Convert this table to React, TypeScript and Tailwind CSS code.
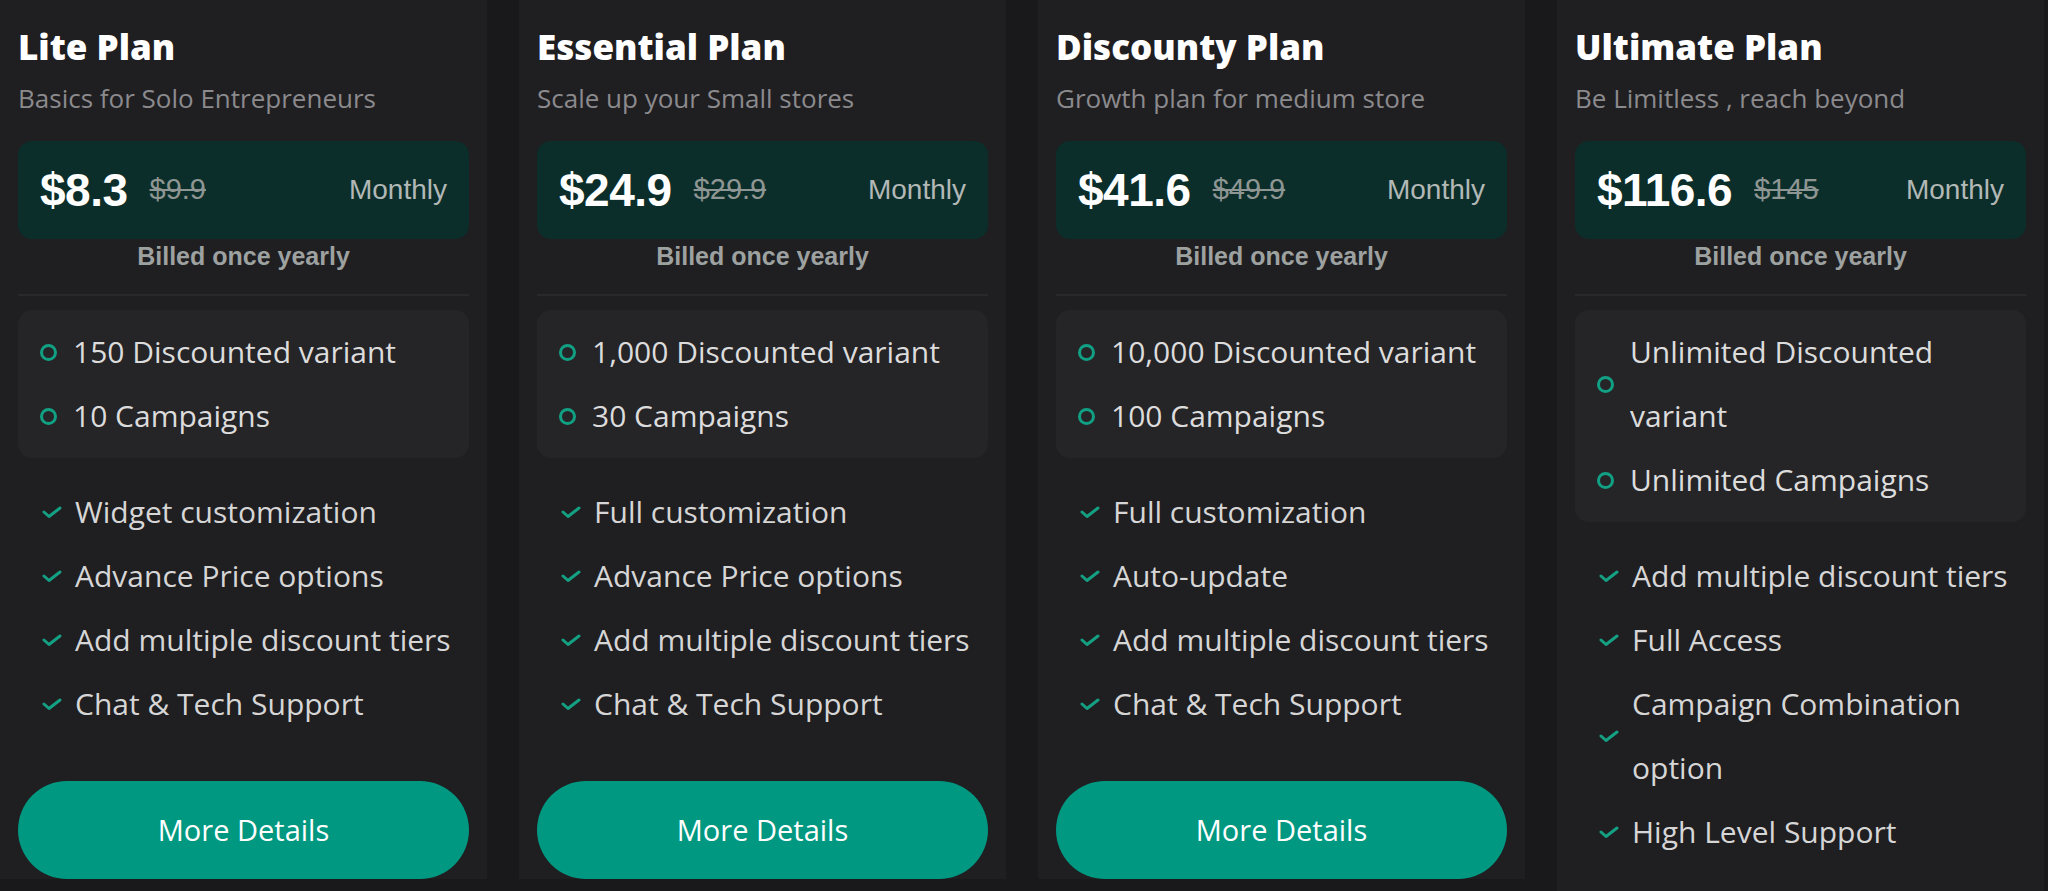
const plans = [
  {
    name: "Lite Plan",
    sub: "Basics for Solo Entrepreneurs",
    price: "$8.3",
    old: "$9.9",
    limits: ["150 Discounted variant", "10 Campaigns"],
    features: [
      "Widget customization",
      "Advance Price options",
      "Add multiple discount tiers",
      "Chat & Tech Support",
    ],
  },
  {
    name: "Essential Plan",
    sub: "Scale up your Small stores",
    price: "$24.9",
    old: "$29.9",
    limits: ["1,000 Discounted variant", "30 Campaigns"],
    features: [
      "Full customization",
      "Advance Price options",
      "Add multiple discount tiers",
      "Chat & Tech Support",
    ],
  },
  {
    name: "Discounty Plan",
    sub: "Growth plan for medium store",
    price: "$41.6",
    old: "$49.9",
    limits: ["10,000 Discounted variant", "100 Campaigns"],
    features: [
      "Full customization",
      "Auto-update",
      "Add multiple discount tiers",
      "Chat & Tech Support",
    ],
  },
  {
    name: "Ultimate Plan",
    sub: "Be Limitless , reach beyond",
    price: "$116.6",
    old: "$145",
    limits: ["Unlimited Discounted variant", "Unlimited Campaigns"],
    features: [
      "Add multiple discount tiers",
      "Full Access",
      "Campaign Combination option",
      "High Level Support",
    ],
  },
];

const Check = () => (
  <svg width="20" height="14" viewBox="0 0 20 14" className="shrink-0">
    <path d="M2 7 L7 11.5 L18 3" fill="none" stroke="#14a083" strokeWidth="3" strokeLinecap="round" strokeLinejoin="round" />
  </svg>
);

type Plan = (typeof plans)[number];

const PlanCard = ({ plan }: { plan: Plan }) => {
  return (
    <div className="flex flex-col bg-[#1f1e21] px-[18px] pt-[23px]">
      <h2 className="text-[35px] leading-[48px] font-extrabold text-white">{plan.name}</h2>
      <p className="mt-[9px] text-[26px] leading-[36px] text-[#8b8a8d]">{plan.sub}</p>

      <div className="mt-[25px] h-[98px] rounded-[14px] bg-[#0c2e2a] flex items-center px-[22px] font-['Liberation_Sans',Arial,sans-serif]">
        <span className="text-[46px] font-bold text-white tracking-[-0.5px]">{plan.price}</span>
        <span className="ml-[22px] text-[29px] text-[#8e9693] line-through">{plan.old}</span>
        <span className="ml-auto text-[28px] text-[#b2b8b6]">Monthly</span>
      </div>
      <p className="mt-[2px] text-center text-[25px] leading-[30px] font-bold text-[#9da1a0] font-['Liberation_Sans',Arial,sans-serif]">
        Billed once yearly
      </p>
      <div className="mt-[23px] h-[2px] bg-[#29282b]" />

      <ul className="mt-[14px] rounded-[14px] bg-[#252427] py-[10px] pl-[22px] pr-[16px]">
        {plan.limits.map((l) => (
          <li key={l} className="flex items-center gap-[16px] text-[30px] leading-[64px] text-[#dcdcdc]">
            <span className="w-[17px] h-[17px] shrink-0 rounded-full border-[3px] border-[#12a084]" />
            <span>{l}</span>
          </li>
        ))}
      </ul>

      <ul className="mt-[22px] pl-[24px]">
        {plan.features.map((f) => (
          <li key={f} className="flex items-center gap-[13px] text-[30px] leading-[64px] text-[#d6d6d6]">
            <Check />
            <span>{f}</span>
          </li>
        ))}
      </ul>

      <button className="mt-[45px] h-[98px] rounded-full bg-[#009881] text-white text-[29px] font-medium shrink-0">
        More Details
      </button>
    </div>
  );
};

export default function App() {
  return (
    <div className="h-[891px] overflow-hidden bg-[#19181b] grid grid-cols-4 gap-[32px] pr-[4px] font-['Open_Sans',sans-serif] items-start">
      {plans.map((p) => (
        <PlanCard key={p.name} plan={p} />
      ))}
    </div>
  );
}
